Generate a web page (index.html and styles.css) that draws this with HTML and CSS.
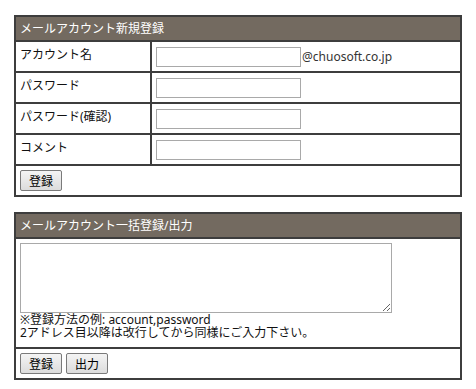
FILE: index.html
```html
<!DOCTYPE html>
<html lang="ja">

<head>
    <meta charset="utf-8">
    <title>メールアカウント管理</title>
    <link rel="stylesheet" href="styles.css">
</head>

<body>
    <div class="page">
        <table class="form-table">
            <tr>
                <th colspan="2">メールアカウント新規登録</th>
            </tr>
            <tr>
                <td class="label">アカウント名</td>
                <td>
                    <div class="field">
                        <input type="text" class="text-input">
                        <span class="domain">@chuosoft.co.jp</span>
                    </div>
                </td>
            </tr>
            <tr>
                <td class="label">パスワード</td>
                <td>
                    <div class="field"><input type="password" class="text-input"></div>
                </td>
            </tr>
            <tr>
                <td class="label">パスワード(確認)</td>
                <td>
                    <div class="field"><input type="password" class="text-input"></div>
                </td>
            </tr>
            <tr>
                <td class="label">コメント</td>
                <td>
                    <div class="field"><input type="text" class="text-input"></div>
                </td>
            </tr>
            <tr>
                <td colspan="2">
                    <div class="buttons">
                        <button class="btn">登録</button>
                    </div>
                </td>
            </tr>
        </table>

        <table class="form-table">
            <tr>
                <th>メールアカウント一括登録/出力</th>
            </tr>
            <tr>
                <td>
                    <textarea class="bulk"></textarea>
                    <div class="note">
                        ※登録方法の例: account,password<br>
                        2アドレス目以降は改行してから同様にご入力下さい。
                    </div>
                </td>
            </tr>
            <tr>
                <td>
                    <div class="buttons">
                        <button class="btn">登録</button>
                        <button class="btn">出力</button>
                    </div>
                </td>
            </tr>
        </table>
    </div>
</body>

</html>
```

FILE: styles.css
```css
:root {
    --line-color: #3d3d3d;
    --head-color: #736a60;
}

body {
    margin: 0;
    font-family: "Noto Sans", "Noto Sans CJK JP", sans-serif;
    font-size: 12px;
    color: #111;
}

.page {
    padding: 15px 0 0 14px;
}

.form-table {
    width: 448px;
    border: 1px solid var(--line-color);
    border-spacing: 0;
    margin-bottom: 15px;
}

.form-table th,
.form-table td {
    border: 1px solid var(--line-color);
    padding: 4px;
    text-align: left;
    vertical-align: top;
}

.form-table th {
    background: var(--head-color);
    color: #fff;
    font-weight: normal;
    line-height: 17px;
    padding: 3px 4px;
}

.form-table td {
    line-height: 18px;
}

.label {
    width: 126px;
}

.field {
    display: flex;
    align-items: center;
    gap: 1px;
    height: 21px;
}

.text-input {
    box-sizing: border-box;
    width: 145px;
    height: 20px;
    margin: 1px 0 0;
    border: 1px solid #a9a9a9;
    padding: 0 2px;
}

.domain {
    color: #333;
}

.buttons {
    display: flex;
    gap: 4px;
}

.btn {
    box-sizing: border-box;
    width: 42px;
    height: 21px;
    padding: 0;
    font-family: inherit;
    font-size: 12px;
    color: #000;
    background: linear-gradient(#f4f4f4, #dcdcdc);
    border: 1px solid #7a7a7a;
    border-radius: 2px;
}

.bulk {
    display: block;
    box-sizing: border-box;
    width: 372px;
    height: 70px;
    margin: 0;
    border: 1px solid #a9a9a9;
}

.note {
    padding-bottom: 4px;
    line-height: 13px;
}
```
